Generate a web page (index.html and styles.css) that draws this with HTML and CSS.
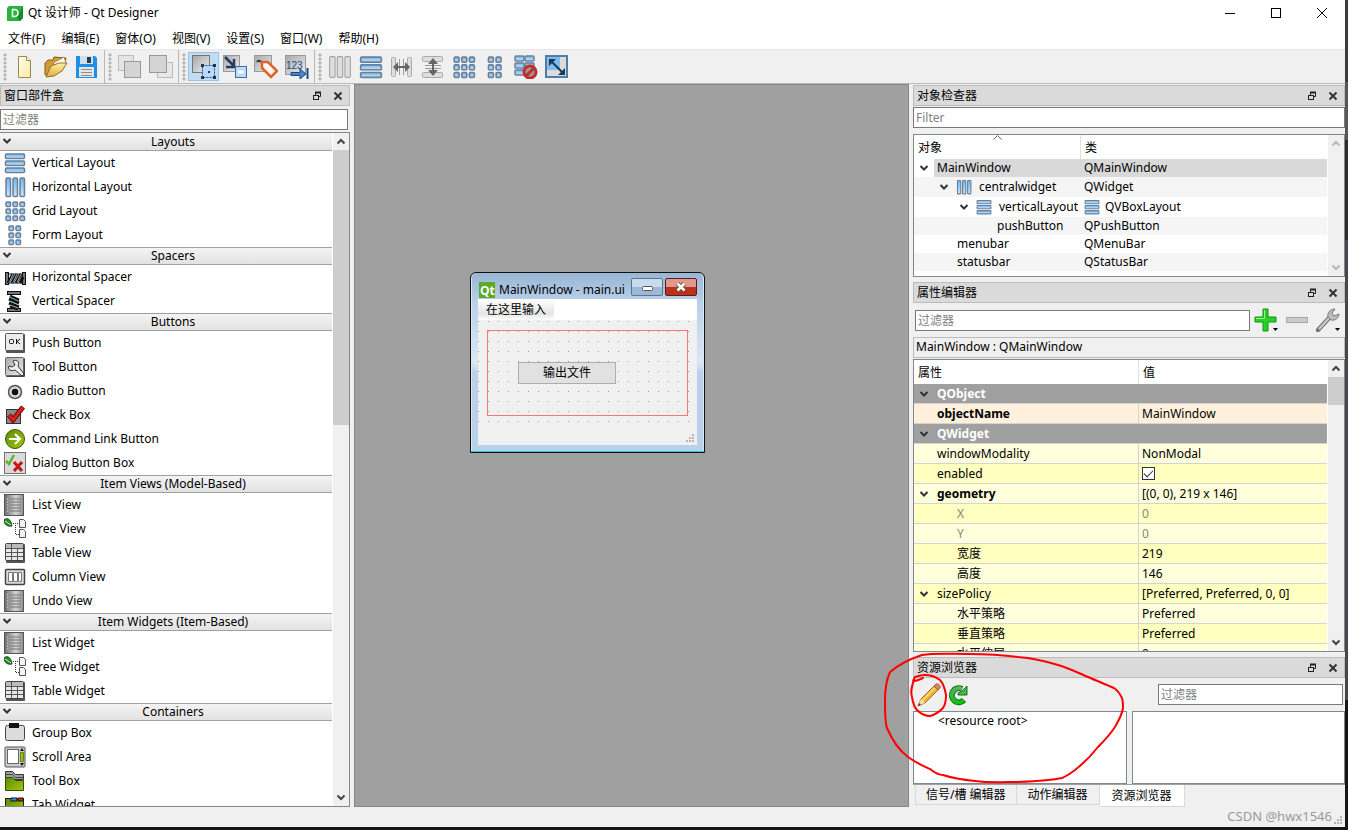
FILE: index.html
```html
<!DOCTYPE html>
<html lang="zh-CN">
<head>
<meta charset="utf-8">
<title>Qt 设计师 - Qt Designer</title>
<link rel="stylesheet" href="styles.css">
</head>
<body>
<svg class="defs" width="0" height="0" aria-hidden="true">
  <defs>
    <linearGradient id="blue" x1="0" y1="0" x2="0" y2="1"><stop offset="0" stop-color="#6fb6e8"/><stop offset="1" stop-color="#c8e6fa"/></linearGradient>
    <linearGradient id="gray" x1="0" y1="0" x2="1" y2="1"><stop offset="0" stop-color="#a8a8a8"/><stop offset="1" stop-color="#ededed"/></linearGradient>
    <linearGradient id="paper" x1="0" y1="0" x2="1" y2="1"><stop offset="0" stop-color="#fffef0"/><stop offset="1" stop-color="#fbe9a0"/></linearGradient>
    <linearGradient id="steel" x1="0" y1="0" x2="1" y2="0"><stop offset="0" stop-color="#6e6e6e"/><stop offset=".6" stop-color="#d4d4d4"/><stop offset="1" stop-color="#8a8a8a"/></linearGradient>
    <linearGradient id="green" x1="0" y1="0" x2="0" y2="1"><stop offset="0" stop-color="#5fae62"/><stop offset="1" stop-color="#12c012"/></linearGradient>
    <linearGradient id="lime" x1="0" y1="0" x2="1" y2="1"><stop offset="0" stop-color="#5d8a00"/><stop offset="1" stop-color="#a4c814"/></linearGradient>
    <linearGradient id="gold" x1="0" y1="0" x2="0" y2="1"><stop offset="0" stop-color="#fff0a8"/><stop offset="1" stop-color="#e2ab3c"/></linearGradient>
  </defs>
  <symbol id="i-vbox" viewBox="0 0 22 22"><g fill="url(#blue)" stroke="#6a7f9b" stroke-width="1.500"><rect x="1.500" y="2" width="19" height="4.500" rx="1"/><rect x="1.500" y="9" width="19" height="4.500" rx="1"/><rect x="1.500" y="16" width="19" height="4.500" rx="1"/></g></symbol>
  <symbol id="i-hbox" viewBox="0 0 22 22"><g fill="url(#blue)" stroke="#6a7f9b" stroke-width="1.500"><rect x="2" y="2" width="4.500" height="18.500" rx="1"/><rect x="9" y="2" width="4.500" height="18.500" rx="1"/><rect x="16" y="2" width="4.500" height="18.500" rx="1"/></g></symbol>
  <symbol id="i-hbox-off" viewBox="0 0 22 22"><g fill="#dedede" stroke="#a4a4a4"><rect x="1.500" y="1.500" width="5" height="19" rx="1"/><rect x="8.500" y="1.500" width="5" height="19" rx="1"/><rect x="15.500" y="1.500" width="5" height="19" rx="1"/></g></symbol>
  <symbol id="i-grid" viewBox="0 0 22 22"><g fill="url(#blue)" stroke="#6a7f9b" stroke-width="1.500"><rect x="2" y="2" width="4.500" height="4.500" rx="1"/><rect x="9" y="2" width="4.500" height="4.500" rx="1"/><rect x="16" y="2" width="4.500" height="4.500" rx="1"/><rect x="2" y="9" width="4.500" height="4.500" rx="1"/><rect x="9" y="9" width="4.500" height="4.500" rx="1"/><rect x="16" y="9" width="4.500" height="4.500" rx="1"/><rect x="2" y="16" width="4.500" height="4.500" rx="1"/><rect x="9" y="16" width="4.500" height="4.500" rx="1"/><rect x="16" y="16" width="4.500" height="4.500" rx="1"/></g></symbol>
  <symbol id="i-form" viewBox="0 0 22 22"><g fill="url(#blue)" stroke="#6a7f9b" stroke-width="1.500"><rect x="5" y="2" width="4.500" height="4.500" rx="1"/><rect x="12" y="2" width="4.500" height="4.500" rx="1"/><rect x="5" y="9" width="4.500" height="4.500" rx="1"/><rect x="12" y="9" width="4.500" height="4.500" rx="1"/><rect x="5" y="16" width="4.500" height="4.500" rx="1"/><rect x="12" y="16" width="4.500" height="4.500" rx="1"/></g></symbol>
  <symbol id="i-hspacer" viewBox="0 0 22 22"><rect x="1.500" y="6.500" width="3" height="12" fill="#777" stroke="#111"/><rect x="18.500" y="6.500" width="3" height="12" fill="#777" stroke="#111"/><path d="M4 17 9 8M8 17l5-9M12 17l5-9M16 17l3-6" stroke="#111" stroke-width="3"/><path d="M5 17l4-9M9 17l4-9M13 17l4-9" stroke="#8fb3c8"/><path d="M5 8h13M5 17h13" stroke="#222"/></symbol>
  <symbol id="i-vspacer" viewBox="0 0 22 22"><rect x="3.500" y="1.500" width="13" height="3" fill="#777" stroke="#111"/><rect x="3.500" y="18.500" width="13" height="3" fill="#777" stroke="#111"/><path d="M6 6l9 4M5 9l10 4M5 13l10 4M6 16l8 3" stroke="#111" stroke-width="3"/><path d="M6 7l8 4M6 11l9 4M6 15l8 3" stroke="#8fb3c8"/></symbol>
  <symbol id="i-push" viewBox="0 0 22 22"><rect x="2" y="2" width="19" height="19" rx="1" fill="#555"/><rect x="1.500" y="1.500" width="18" height="17" rx="1" fill="#ececec" stroke="#555"/><rect x="5.500" y="7.500" width="4" height="4" rx="1" fill="none" stroke="#111"/><path d="M12.500 7v5M16 7l-3 2.500 3 2.500" fill="none" stroke="#111"/></symbol>
  <symbol id="i-tool" viewBox="0 0 22 22"><rect x="2" y="2" width="19" height="19" rx="1" fill="#444"/><rect x="1.500" y="1.500" width="18" height="18" rx="1" fill="url(#gray)" stroke="#666"/><path d="M9 5c4-2 7 1 5 5l6 8-2 2-7-6c-4 2-8-1-6-4l3 1 3-2z" fill="#eee" stroke="#333"/></symbol>
  <symbol id="i-radio" viewBox="0 0 22 22"><circle cx="11" cy="12" r="6.500" fill="#d6d6d6" stroke="#555" stroke-width="1.500"/><circle cx="11" cy="12" r="3.200" fill="#111"/></symbol>
  <symbol id="i-check" viewBox="0 0 22 22"><rect x="2.500" y="5.500" width="14" height="14" fill="#8b8b8b" stroke="#333"/><path d="M5 11l4 5L19 3" fill="none" stroke="#5b0808" stroke-width="5"/><path d="M5 11l4 5L19 3" fill="none" stroke="#e01c1c" stroke-width="3"/></symbol>
  <symbol id="i-link" viewBox="0 0 22 22"><circle cx="11" cy="11" r="9.500" fill="url(#lime)" stroke="#3c5600"/><path d="M5 11h11M11 6l5 5-5 5" fill="none" stroke="#fff" stroke-width="2"/></symbol>
  <symbol id="i-dialog" viewBox="0 0 22 22"><rect x=".5" y=".5" width="21" height="21" fill="#dadada" stroke="#707070"/><path d="M2 9l3 3 5-9" fill="none" stroke="#5db52c" stroke-width="2.500"/><path d="M10 10l8 9M18 10l-8 9" stroke="#c41414" stroke-width="3"/></symbol>
  <symbol id="i-list" viewBox="0 0 22 22"><rect x=".5" y=".5" width="19" height="21" fill="url(#steel)" stroke="#555"/><path d="M6 5h11M6 8h11M6 11h11M6 14h11M6 17h11" stroke="#777"/><path d="M3 5h1M3 8h1M3 11h1M3 14h1M3 17h1" stroke="#ddd"/></symbol>
  <symbol id="i-tree" viewBox="0 0 22 22"><path d="M0 2c3-3 7-1 8 6-5 1-8-2-8-6z" fill="#2c8a2c" stroke="#124a12"/><path d="M1 3l6 4" stroke="#c6f0b8"/><path d="M9 5.500h6M11.500 7v10M12 16.500h4" stroke="#333" stroke-dasharray="1 1" fill="none"/><path d="M15.500 1.500h4l2 2v6h-6zM15.500 11.500h4l2 2v6h-6z" fill="#f3f3f3" stroke="#555"/></symbol>
  <symbol id="i-table" viewBox="0 0 22 22"><rect x="2" y="2" width="19" height="19" rx="1" fill="#555"/><rect x="1.500" y="1.500" width="18" height="17" rx="1" fill="#e8e8e8" stroke="#444"/><path d="M2 4h17" stroke="#bbb" stroke-width="4"/><path d="M2 6.500h17M2 10.500h17M2 14.500h17M7.500 2v16M13.500 6v12" stroke="#555"/></symbol>
  <symbol id="i-column" viewBox="0 0 22 22"><rect x="1.500" y="3.500" width="19" height="15" rx="1" fill="#ddd" stroke="#444" stroke-width="1.500"/><path d="M4.500 6.500h4v9h-4zM9.500 6.500h4v9h-4zM14.500 6.500h3v9h-3z" fill="#fff" stroke="#777"/></symbol>
  <symbol id="i-group" viewBox="0 0 22 22"><rect x="1.500" y="3.500" width="19" height="15" rx="2" fill="#dcdcdc" stroke="#444"/><path d="M5 1h10v5H5z" fill="#111"/></symbol>
  <symbol id="i-scroll" viewBox="0 0 22 22"><rect x="1" y="1" width="20" height="20" rx="1" fill="#ccc" stroke="#555"/><rect x="3.500" y="3.500" width="11" height="14" fill="#fff" stroke="#666"/><path d="M18 2l2 3h-4zM18 20l2-3h-4z" fill="#111"/><path d="M16.500 6.500h3v9h-3z" fill="#9cbe18" stroke="#5d8a00"/></symbol>
  <symbol id="i-toolbox" viewBox="0 0 22 22"><path d="M1.500 1.500h7l3 3h8v5h-18z" fill="#a0a0a0" stroke="#333"/><path d="M1.500 4.500h7l3 3h8" fill="none" stroke="#444"/><path d="M1.500 7.500h7l3 3h8v10h-18z" fill="url(#lime)" stroke="#334c00"/></symbol>
  <symbol id="i-tab" viewBox="0 0 22 22"><rect x="1.500" y="4.500" width="18" height="16" fill="url(#lime)" stroke="#222"/><path d="M7 4h6v3H7z" fill="#2f8fe8" stroke="#111"/><path d="M14 4h5v3h-5z" fill="#e82020" stroke="#111"/></symbol>

  <symbol id="i-new" viewBox="0 0 24 24"><path d="M5.500 1.500h8l4 4v17h-12z" fill="url(#paper)" stroke="#9a8a50"/><path d="M13.500 1.500v4h4" fill="#fff" stroke="#9a8a50"/></symbol>
  <symbol id="i-open" viewBox="0 0 24 24"><path d="M1 20V8l3-3h5l1-3 12 1-1 6-8 8z" fill="#d69a32" stroke="#80601c"/><path d="M9 8l11-6 2 6-6 6z" fill="#fdfdf0" stroke="#a08a50"/><path d="M2 22l5-11 8-3h8l-5 8-8 5z" fill="url(#gold)" stroke="#94701e"/></symbol>
  <symbol id="i-save" viewBox="0 0 24 24"><path d="M1 1h19l2 2v20H1z" fill="#1e90e8"/><path d="M5 1h13v8H5z" fill="#cfe0ea"/><path d="M12 2h4v6h-4z" fill="#2d3e50"/><path d="M4 12h15v10H4z" fill="#e6e6e6"/><path d="M6 14.500h11M6 17.500h11M6 20.500h11" stroke="#8c8c8c"/></symbol>
  <symbol id="i-raise" viewBox="0 0 24 24"><rect x=".5" y=".5" width="15" height="15" fill="#e4e4e4" stroke="#bcbcbc"/><rect x="6.500" y="6.500" width="16" height="16" fill="#d4d4d4" stroke="#999"/></symbol>
  <symbol id="i-lower" viewBox="0 0 24 24"><rect x="8.500" y="7.500" width="15" height="15" fill="#e8e8e8" stroke="#bcbcbc"/><rect x=".5" y=".5" width="17" height="17" fill="#d4d4d4" stroke="#999"/></symbol>
  <symbol id="i-edit" viewBox="0 0 24 24"><rect x=".5" y=".5" width="17" height="17" fill="url(#gray)" stroke="#777"/><rect x="10.500" y="10.500" width="12" height="12" fill="#b9d9ff" stroke="#2e4b78" stroke-dasharray="2 1"/><path d="M9 9h3v3H9zM21 9h3v3h-3zM9 21h3v3H9zM21 21h3v3h-3zM16 16h2v2h-2z" fill="#1d355e"/></symbol>
  <symbol id="i-signal" viewBox="0 0 24 24"><rect x=".5" y=".5" width="16" height="16" fill="url(#gray)" stroke="#999"/><path d="M2 2l9 9M11 4v8H3" fill="none" stroke="#253e5e" stroke-width="2.500"/><rect x="12.500" y="11.500" width="11" height="11" fill="#b9d9ff" stroke="#426ba8"/><path d="M15 17h6" stroke="#fff" stroke-width="3"/></symbol>
  <symbol id="i-buddy" viewBox="0 0 24 24"><rect x=".5" y=".5" width="17" height="16" fill="url(#gray)" stroke="#999"/><path d="M3 7c2-3 5 0 6 3" fill="none" stroke="#333" stroke-width="2"/><path d="M8 7l6 0 9 9-6 6-9-9z" fill="#fff3ea" stroke="#dc6428" stroke-width="2.500"/></symbol>
  <symbol id="i-hsplit" viewBox="0 0 24 24"><g fill="#dedede" stroke="#aaa"><rect x="1.500" y="2.500" width="4" height="19" rx="1"/><rect x="17.500" y="2.500" width="4" height="19" rx="1"/></g><path d="M9.500 4v16M13.500 4v16" stroke="#999"/><path d="M3 12l5-5v4h7V7l5 5-5 5v-4H8v4z" fill="#666"/></symbol>
  <symbol id="i-vsplit" viewBox="0 0 24 24"><g fill="#dedede" stroke="#aaa"><rect x="1.500" y="1.500" width="20" height="5" rx="1"/><rect x="1.500" y="17.500" width="20" height="5" rx="1"/></g><path d="M4 10.500h16M4 13.500h16" stroke="#999"/><path d="M12 3l5 6h-4v6h4l-5 6-5-6h4V9H7z" fill="#666"/></symbol>
  <symbol id="i-break" viewBox="0 0 24 24"><g fill="url(#blue)" stroke="#6a7f9b" stroke-width="1.500"><rect x="1" y="1" width="9" height="5" rx="1"/><rect x="11" y="1" width="9" height="5" rx="1"/><rect x="1" y="8" width="9" height="5" rx="1"/><rect x="11" y="8" width="9" height="5" rx="1"/><rect x="1" y="15" width="9" height="5" rx="1"/></g><circle cx="16" cy="17" r="6" fill="#9a9a9a" stroke="#c42c2c" stroke-width="3"/><path d="M12 21l8-8" stroke="#c42c2c" stroke-width="3"/></symbol>
  <symbol id="i-adjust" viewBox="0 0 24 24"><rect x="1" y="1" width="21" height="21" fill="#dcdcdc" stroke="#4f7cab" stroke-width="2"/><path d="M2 2h13v13H2z" fill="#80bdec"/><path d="M6 6l11 11" stroke="#123a5c" stroke-width="2"/><path d="M4 4h7l-7 7zM20 20h-7l7-7z" fill="#123a5c"/></symbol>

  <symbol id="i-chevron" viewBox="0 0 10 10"><path d="M1.500 3l3.500 3.500L8.500 3" fill="none" stroke="currentColor" stroke-width="2"/></symbol>
  <symbol id="i-float" viewBox="0 0 10 10"><path d="M3.500 4V1.500h5v4H6" fill="none" stroke="#222"/><path d="M3 1.500h6" stroke="#222" stroke-width="2"/><rect x="1.500" y="4.500" width="5" height="4" fill="none" stroke="#222"/></symbol>
  <symbol id="i-close" viewBox="0 0 10 10"><path d="M1.500 1.500l7 7M8.500 1.500l-7 7" stroke="#333" stroke-width="2"/></symbol>
  <symbol id="i-plus" viewBox="0 0 24 24"><path d="M9 1h5v8h8v5h-8v9H9v-9H1V9h8z" fill="#25d225" stroke="#119611"/><path d="M10.500 2v8.500H2" fill="none" stroke="#9df59d"/><path d="M19 20h5l-2.500 3z" fill="#000"/></symbol>
  <symbol id="i-minus" viewBox="0 0 24 24"><rect x="1.500" y="9.500" width="21" height="5" fill="#ccc" stroke="#a6a6a6"/></symbol>
  <symbol id="i-wrench" viewBox="0 0 24 24"><path d="M2 22L14 9" stroke="#777" stroke-width="4.500" stroke-linecap="round"/><path d="M3 21L14 9" stroke="#cfcfcf" stroke-width="2"/><path d="M12 9c-1-5 3-8 7-8l-3 4 2 3 5-2c0 4-4 7-8 6z" fill="#bdbdbd" stroke="#777"/><path d="M19 20h5l-2.500 3z" fill="#000"/></symbol>
  <symbol id="i-pencil" viewBox="0 0 24 24"><path d="M1 23l3-7L17 3l4 4L8 20z" fill="#f2b134" stroke="#a67418"/><path d="M5 18L18 5" stroke="#ffe090" stroke-width="1.500"/><path d="M17 3l2-2c2-1 5 2 4 4l-2 2z" fill="#d98163" stroke="#a35b45"/><path d="M1 23l3-7 4 4z" fill="#f3dcae"/><path d="M1 23l1-3 2 2z" fill="#333"/></symbol>
  <symbol id="i-reload" viewBox="0 0 24 24"><path d="M16 6a7 7 0 1 0 2 11" fill="none" stroke="#0a7a14" stroke-width="6"/><path d="M16 6a7 7 0 1 0 2 11" fill="none" stroke="url(#green)" stroke-width="4"/><path d="M12 12V10l4-2 5-5v9z" fill="#4cb351" stroke="#0a7a14"/></symbol>
</svg>

<div class="app">
  <header class="titlebar">
    <svg class="logo" viewBox="0 0 16 16" aria-hidden="true"><path d="M0 3l2-2h14v12l-3 3H0z" fill="#28b43c"/><path d="M16 1v12l-3 3-3-3z" fill="#148a2a"/><path d="M5.500 4.500h2a3 3 0 0 1 0 7h-2z" fill="none" stroke="#fff" stroke-width="1.500"/></svg>
    <h1>Qt 设计师 - Qt Designer</h1>
    <div class="window-buttons">
      <button aria-label="最小化"><svg viewBox="0 0 12 12"><path d="M1 6.500h10" stroke="#000"/></svg></button>
      <button aria-label="最大化"><svg viewBox="0 0 12 12"><rect x="1.500" y="1.500" width="9" height="9" fill="none" stroke="#000"/></svg></button>
      <button aria-label="关闭"><svg viewBox="0 0 12 12"><path d="M1 1l10 10M11 1L1 11" stroke="#000"/></svg></button>
    </div>
  </header>

  <nav class="menubar">
    <button>文件(F)</button><button>编辑(E)</button><button>窗体(O)</button><button>视图(V)</button><button>设置(S)</button><button>窗口(W)</button><button>帮助(H)</button>
  </nav>

  <div class="toolbars">
    <div class="toolbar">
      <button aria-label="新建"><svg><use href="#i-new"/></svg></button>
      <button aria-label="打开"><svg><use href="#i-open"/></svg></button>
      <button aria-label="保存"><svg><use href="#i-save"/></svg></button>
    </div>
    <div class="toolbar">
      <button aria-label="放到前面"><svg><use href="#i-raise"/></svg></button>
      <button aria-label="放到后面"><svg><use href="#i-lower"/></svg></button>
    </div>
    <div class="toolbar">
      <button class="active" aria-label="编辑窗口部件"><svg><use href="#i-edit"/></svg></button>
      <button aria-label="编辑信号/槽"><svg><use href="#i-signal"/></svg></button>
      <button aria-label="编辑伙伴"><svg><use href="#i-buddy"/></svg></button>
      <button aria-label="编辑 Tab 顺序"><svg viewBox="0 0 24 24"><rect x=".5" y=".5" width="20" height="19" fill="url(#gray)" stroke="#999"/><text x="1" y="14" class="icon-digits">123</text><path d="M6 17.500h9V14l6 5-6 5v-3.500H6z" fill="#4c84c8" stroke="#1c4984"/><path d="M22.500 13v11" stroke="#1c4984" stroke-width="2"/></svg></button>
    </div>
    <div class="toolbar">
      <button aria-label="水平布局"><svg><use href="#i-hbox-off"/></svg></button>
      <button aria-label="垂直布局"><svg><use href="#i-vbox"/></svg></button>
      <button aria-label="使用分裂器水平布局"><svg><use href="#i-hsplit"/></svg></button>
      <button aria-label="使用分裂器垂直布局"><svg><use href="#i-vsplit"/></svg></button>
      <button aria-label="栅格布局"><svg><use href="#i-grid"/></svg></button>
      <button aria-label="在窗体布局中布局"><svg><use href="#i-form"/></svg></button>
      <button aria-label="打破布局"><svg><use href="#i-break"/></svg></button>
      <button aria-label="调整大小"><svg><use href="#i-adjust"/></svg></button>
    </div>
  </div>

  <main class="workspace">
    <section class="widget-box">
      <div class="dock-title"><h2>窗口部件盒</h2><button aria-label="浮动"><svg><use href="#i-float"/></svg></button><button aria-label="关闭"><svg><use href="#i-close"/></svg></button></div>
      <input class="filter" type="text" placeholder="过滤器" aria-label="过滤器">
      <div class="frame widget-frame">
        <div class="widget-list">
          <button class="category"><svg><use href="#i-chevron"/></svg>Layouts</button>
          <ul>
            <li><svg><use href="#i-vbox"/></svg>Vertical Layout</li>
            <li><svg><use href="#i-hbox"/></svg>Horizontal Layout</li>
            <li><svg><use href="#i-grid"/></svg>Grid Layout</li>
            <li><svg><use href="#i-form"/></svg>Form Layout</li>
          </ul>
          <button class="category"><svg><use href="#i-chevron"/></svg>Spacers</button>
          <ul>
            <li><svg><use href="#i-hspacer"/></svg>Horizontal Spacer</li>
            <li><svg><use href="#i-vspacer"/></svg>Vertical Spacer</li>
          </ul>
          <button class="category"><svg><use href="#i-chevron"/></svg>Buttons</button>
          <ul>
            <li><svg><use href="#i-push"/></svg>Push Button</li>
            <li><svg><use href="#i-tool"/></svg>Tool Button</li>
            <li><svg><use href="#i-radio"/></svg>Radio Button</li>
            <li><svg><use href="#i-check"/></svg>Check Box</li>
            <li><svg><use href="#i-link"/></svg>Command Link Button</li>
            <li><svg><use href="#i-dialog"/></svg>Dialog Button Box</li>
          </ul>
          <button class="category"><svg><use href="#i-chevron"/></svg>Item Views (Model-Based)</button>
          <ul>
            <li><svg><use href="#i-list"/></svg>List View</li>
            <li><svg><use href="#i-tree"/></svg>Tree View</li>
            <li><svg><use href="#i-table"/></svg>Table View</li>
            <li><svg><use href="#i-column"/></svg>Column View</li>
            <li><svg><use href="#i-list"/></svg>Undo View</li>
          </ul>
          <button class="category"><svg><use href="#i-chevron"/></svg>Item Widgets (Item-Based)</button>
          <ul>
            <li><svg><use href="#i-list"/></svg>List Widget</li>
            <li><svg><use href="#i-tree"/></svg>Tree Widget</li>
            <li><svg><use href="#i-table"/></svg>Table Widget</li>
          </ul>
          <button class="category"><svg><use href="#i-chevron"/></svg>Containers</button>
          <ul>
            <li><svg><use href="#i-group"/></svg>Group Box</li>
            <li><svg><use href="#i-scroll"/></svg>Scroll Area</li>
            <li><svg><use href="#i-toolbox"/></svg>Tool Box</li>
            <li><svg><use href="#i-tab"/></svg>Tab Widget</li>
          </ul>
        </div>
        <div class="scrollbar"><svg class="up"><use href="#i-chevron"/></svg><div class="track"><div class="thumb thumb-long"></div></div><svg><use href="#i-chevron"/></svg></div>
      </div>
    </section>

    <section class="canvas">
      <div class="form-window">
        <div class="form-title">
          <svg class="qt" viewBox="0 0 16 16" aria-hidden="true"><rect width="16" height="16" fill="#5caa28"/><text x="1" y="13" class="qt-text">Qt</text></svg>
          <span class="form-name">MainWindow - main.ui</span>
          <button class="win-btn" aria-label="最小化"><svg viewBox="0 0 30 16"><rect x="10.500" y="7.500" width="10" height="4" rx="1" fill="#fff" stroke="#555"/></svg></button>
          <button class="win-btn win-close" aria-label="关闭"><svg viewBox="0 0 30 16"><path d="M11.500 4.500l7 7M18.500 4.500l-7 7" stroke="#555" stroke-width="4.500"/><path d="M11.500 4.500l7 7M18.500 4.500l-7 7" stroke="#fff" stroke-width="2.500"/></svg></button>
        </div>
        <div class="form-body">
          <div class="form-menu"><button>在这里输入</button></div>
          <div class="form-central">
            <div class="v-layout"></div>
            <button class="push-button">输出文件</button>
          </div>
          <div class="form-status"><i class="size-grip"></i></div>
        </div>
      </div>
    </section>

    <aside class="docks">
      <section class="inspector">
        <div class="dock-title"><h2>对象检查器</h2><button aria-label="浮动"><svg><use href="#i-float"/></svg></button><button aria-label="关闭"><svg><use href="#i-close"/></svg></button></div>
        <input class="filter" type="text" placeholder="Filter" aria-label="Filter">
        <div class="frame tree-frame">
          <table class="tree">
            <colgroup><col class="col-object"><col></colgroup>
            <thead><tr><th>对象<svg class="sort" viewBox="0 0 9 5"><path d="M.5 4.500l4-4 4 4" fill="none" stroke="#666"/></svg></th><th>类</th></tr></thead>
            <tbody>
              <tr class="selected"><td><div class="cell"><svg class="chev"><use href="#i-chevron"/></svg>MainWindow</div></td><td>QMainWindow</td></tr>
              <tr class="tall alt"><td><div class="cell level-1"><svg class="chev"><use href="#i-chevron"/></svg><svg class="ico"><use href="#i-hbox"/></svg>centralwidget</div></td><td>QWidget</td></tr>
              <tr class="tall"><td><div class="cell level-2"><svg class="chev"><use href="#i-chevron"/></svg><svg class="ico"><use href="#i-vbox"/></svg>verticalLayout</div></td><td><div class="cell"><svg class="ico"><use href="#i-vbox"/></svg>QVBoxLayout</div></td></tr>
              <tr class="alt"><td><div class="cell level-4">pushButton</div></td><td>QPushButton</td></tr>
              <tr><td><div class="cell level-3">menubar</div></td><td>QMenuBar</td></tr>
              <tr class="alt"><td><div class="cell level-3">statusbar</div></td><td>QStatusBar</td></tr>
            </tbody>
          </table>
          <div class="scrollbar disabled"><svg class="up"><use href="#i-chevron"/></svg><div class="track"></div><svg><use href="#i-chevron"/></svg></div>
        </div>
      </section>

      <section class="properties">
        <div class="dock-title"><h2>属性编辑器</h2><button aria-label="浮动"><svg><use href="#i-float"/></svg></button><button aria-label="关闭"><svg><use href="#i-close"/></svg></button></div>
        <div class="property-tools">
          <input class="filter" type="text" placeholder="过滤器" aria-label="属性过滤器">
          <button aria-label="添加动态属性"><svg><use href="#i-plus"/></svg></button>
          <button aria-label="删除动态属性"><svg><use href="#i-minus"/></svg></button>
          <button aria-label="配置"><svg><use href="#i-wrench"/></svg></button>
        </div>
        <div class="class-label">MainWindow : QMainWindow</div>
        <div class="frame property-frame">
          <div class="property-scroll">
          <table class="props">
            <colgroup><col class="col-name"><col></colgroup>
            <thead><tr><th>属性</th><th>值</th></tr></thead>
            <tbody>
              <tr class="group"><td colspan="2"><div class="cell"><svg class="chev"><use href="#i-chevron"/></svg>QObject</div></td></tr>
              <tr class="peach changed"><td><div class="cell leaf">objectName</div></td><td>MainWindow</td></tr>
              <tr class="group"><td colspan="2"><div class="cell"><svg class="chev"><use href="#i-chevron"/></svg>QWidget</div></td></tr>
              <tr><td><div class="cell leaf">windowModality</div></td><td>NonModal</td></tr>
              <tr class="dark"><td><div class="cell leaf">enabled</div></td><td><div class="cell"><input class="tick" type="checkbox" checked aria-label="enabled"></div></td></tr>
              <tr class="changed"><td><div class="cell"><svg class="chev"><use href="#i-chevron"/></svg>geometry</div></td><td>[(0, 0), 219 x 146]</td></tr>
              <tr class="dark off"><td><div class="cell sub">X</div></td><td>0</td></tr>
              <tr class="off"><td><div class="cell sub">Y</div></td><td>0</td></tr>
              <tr class="dark"><td><div class="cell sub">宽度</div></td><td>219</td></tr>
              <tr><td><div class="cell sub">高度</div></td><td>146</td></tr>
              <tr class="dark"><td><div class="cell"><svg class="chev"><use href="#i-chevron"/></svg>sizePolicy</div></td><td>[Preferred, Preferred, 0, 0]</td></tr>
              <tr><td><div class="cell sub">水平策略</div></td><td>Preferred</td></tr>
              <tr class="dark"><td><div class="cell sub">垂直策略</div></td><td>Preferred</td></tr>
              <tr><td><div class="cell sub">水平伸展</div></td><td>0</td></tr>
            </tbody>
          </table>
          </div>
          <div class="scrollbar"><svg class="up"><use href="#i-chevron"/></svg><div class="track"><div class="thumb thumb-short"></div></div><svg><use href="#i-chevron"/></svg></div>
        </div>
      </section>

      <section class="resources">
        <div class="dock-title"><h2>资源浏览器</h2><button aria-label="浮动"><svg><use href="#i-float"/></svg></button><button aria-label="关闭"><svg><use href="#i-close"/></svg></button></div>
        <div class="resource-tools">
          <button aria-label="编辑资源"><svg><use href="#i-pencil"/></svg></button>
          <button aria-label="重新加载"><svg><use href="#i-reload"/></svg></button>
          <input class="filter" type="text" placeholder="过滤器" aria-label="资源过滤器">
        </div>
        <div class="resource-views">
          <div class="frame root-view">&lt;resource root&gt;</div>
          <div class="frame"></div>
        </div>
        <svg class="annotation" viewBox="0 0 250 140" aria-hidden="true"><g fill="none" stroke="#f00" stroke-width="2" stroke-linecap="round" stroke-linejoin="round"><path d="M37 2C25 6 12 13 5 19C1 28 0 38 0 47C0 62 0 70 2 75C8 89 15 98 23 104C33 111 38 113 45 116C50 120 54 122 58 122C70 126 80 127 90 128C105 130 120 129 133 129C155 128 168 127 177 125C182 123 186 120 190 117C200 109 206 103 213 94C221 86 226 80 230 74C234 67 237 62 238 55C238 51 238 48 237 45C235 41 232 37 229 35C220 31 212 28 203 24C193 20 184 15 173 12C160 8 146 5 133 4C118 2 100 1 83 1C65 1 50 0 37 2"/><path d="M29 27C27 33 25 38 27 44C28 50 29 54 32 57C36 61 40 63 45 63C50 62 54 59 58 55C61 51 61 47 61 42C60 36 59 31 55 27C51 24 45 22 40 22C36 22 33 23 30 24L28 28C31 28 34 27 38 25"/></g></svg>
      </section>

      <nav class="tabs"><button>信号/槽 编辑器</button><button>动作编辑器</button><button class="current">资源浏览器</button></nav>
    </aside>
  </main>

  <footer class="statusbar"><span>CSDN @hwx1546</span><i class="size-grip"></i></footer>
</div>
</body>
</html>
```

FILE: styles.css
```css
* { box-sizing: border-box; }

body {
  margin: 0;
  height: 100vh;
  padding: 0 3px 3px 0;
  overflow: hidden;
  background: linear-gradient(#3a3d3f 0 82px, #55585a 82px 140px, #2b2b2b 140px 240px, #45484a 240px 700px, #161616 700px);
  font: 12px/18px "Noto Sans", "Noto Sans CJK SC", sans-serif;
  color: #000;
}

button, input { font: inherit; color: inherit; margin: 0; }
button { border: 0; padding: 0; background: none; }
h1, h2 { margin: 0; font-size: 12px; font-weight: 400; }
ul { list-style: none; margin: 0; padding: 0; }
svg { display: block; flex: none; }
.defs { position: absolute; }
.icon-digits { font: 10px "Liberation Sans", sans-serif; fill: #1c4984; }

.app { height: 100%; display: flex; flex-direction: column; background: #f0f0f0; }

.titlebar { height: 25px; flex: none; display: flex; align-items: center; background: #fff; padding-left: 7px; gap: 5px; }
.titlebar h1 { flex: 1; }
.logo { width: 16px; height: 16px; }
.window-buttons { display: flex; }
.window-buttons button { width: 46px; height: 25px; display: grid; place-items: center; }
.window-buttons svg { width: 12px; height: 12px; }

.menubar { height: 25px; flex: none; display: flex; background: #fff; border-bottom: 1px solid #e8e8e8; padding-top: 3px; }
.menubar button { padding: 0 8px; }

.toolbars { height: 34px; flex: none; display: flex; border-bottom: 1px solid #b8b8b8; }
.toolbar { display: flex; align-items: center; padding-right: 2px; border-right: 1px solid #b8b8b8; }
.toolbar:last-child { border-right: 0; }
.toolbar::before { content: ""; width: 9px; height: 28px; background: radial-gradient(circle at 5px 2px, #b4b4b4 1px, transparent 2px) 0 0 / 9px 4px; }
.toolbar button { width: 31px; height: 29px; display: grid; place-items: center; }
.toolbar .active { background: #c2ddf2; border: 1px solid #94c4ea; }
.toolbar svg { width: 24px; height: 24px; }

.workspace { flex: 1; min-height: 0; display: grid; grid-template-columns: 350px minmax(0, 1fr) 432px; gap: 4px; }

.dock-title { height: 21px; flex: none; display: flex; align-items: center; gap: 11px; padding: 0 6px 0 3px; background: #dadada; border: 1px solid #bcbcbc; }
.dock-title h2 { flex: 1; }
.dock-title svg { width: 10px; height: 10px; }
.filter { height: 21px; width: 100%; flex: none; border: 1px solid #7a7a7a; border-radius: 0; padding: 0 2px; background: #fff; }
.filter::placeholder { color: #7f7f7f; opacity: 1; }
.frame { border: 1px solid #828790; background: #fff; }

.scrollbar { width: 17px; flex: none; background: #f0f0f0; border-left: 1px solid #fff; display: flex; flex-direction: column; align-items: center; color: #444; }
.scrollbar svg { width: 10px; height: 17px; }
.scrollbar .up { transform: rotate(180deg); }
.track { flex: 1; width: 100%; min-height: 0; }
.thumb { background: #cdcdcd; }
.thumb-long { height: 43%; }
.thumb-short { height: 28px; }
.disabled { color: #b8b8b8; }

.widget-box { min-height: 0; display: flex; flex-direction: column; padding-top: 1px; }
.widget-box .filter { margin: 3px 0 2px; width: 348px; }
.widget-frame { flex: 1; min-height: 0; display: flex; border-left: 0; }
.widget-list { flex: 1; min-width: 0; overflow: hidden; }
.category { position: relative; display: block; width: 100%; height: 18px; padding-left: 14px; line-height: 16px; text-align: center; border-top: 1px solid #a0a0a0; border-bottom: 1px solid #a0a0a0; background: linear-gradient(#f4f4f4, #e2e2e2); }
.category:first-child { border-top-color: #f0f0f0; }
.category svg { position: absolute; left: 2px; top: 2px; width: 10px; height: 10px; color: #333; }
.widget-list li { height: 24px; display: flex; align-items: center; gap: 6px; padding-left: 4px; padding-bottom: 1px; }
.widget-list li svg { width: 22px; height: 22px; }

.canvas { position: relative; background: #a0a0a0; border: 1px solid #828790; overflow: hidden; }
.form-window { position: absolute; left: 115px; top: 187px; width: 235px; border: 1px solid #111; border-radius: 6px 6px 0 0; padding: 0 7px 7px; background: linear-gradient(#9ab6d4, #b9d1ea 30px, #dbe8f4 90px, #b9d1ea 100px); box-shadow: inset 0 -1px #35c8dc, inset 1px 0 #dceaf6, inset -1px 0 #dceaf6; }
.form-title { height: 26px; display: flex; gap: 2px; }
.qt { width: 16px; height: 16px; align-self: flex-end; margin: 0 2px 1px 1px; }
.qt-text { font: bold 12px "Open Sans", sans-serif; fill: #fff; }
.form-name { flex: 1; min-width: 0; padding-top: 8px; white-space: nowrap; }
.win-btn { width: 32px; height: 18px; margin-top: 5px; border: 1px solid #5c7490; border-radius: 2px; background: linear-gradient(#c8dcf0 50%, #9cb8d6 50%); }
.win-close { background: linear-gradient(#e0998c 50%, #b8321c 50%); border-color: #5b1c1c; }
.win-btn svg { width: 30px; height: 16px; }
.form-body { background: #f0f0f0; }
.form-menu { height: 21px; background: #fff; }
.form-menu button { height: 21px; padding: 0 8px; background: linear-gradient(#fff, #e4e4e4 70%, #fff); }
.form-central { position: relative; height: 105px; background: conic-gradient(at 1px 1px, transparent 270deg, #999 270deg) 0 1px / 10px 10px; }
.v-layout { position: absolute; inset: 10px 9px 9px; border: 1px solid #f47878; }
.push-button { position: absolute; left: 40px; top: 42px; width: 98px; height: 22px; border: 1px solid #adadad; background: #e1e1e1; }
.form-status { height: 20px; display: flex; justify-content: flex-end; align-items: flex-end; padding: 2px; }
.size-grip { width: 9px; height: 9px; background: conic-gradient(at 2px 2px, transparent 270deg, #b4b4b4 270deg) 0 0 / 3px 3px; clip-path: polygon(100% 0, 100% 100%, 0 100%, 0 66%, 33% 66%, 33% 33%, 66% 33%, 66% 0); }

.docks { min-height: 0; display: flex; flex-direction: column; padding-top: 1px; }
.inspector, .properties, .resources { display: flex; flex-direction: column; }
.inspector .filter { margin: 1px 0 6px; }
.tree-frame { height: 143px; display: flex; }
table { border-spacing: 0; table-layout: fixed; width: 100%; }
th, td { padding: 0 3px; text-align: left; font-weight: 400; white-space: nowrap; overflow: hidden; }
th { height: 24px; vertical-align: middle; padding: 2px 4px 0; }
.tree { flex: 1; align-self: flex-start; background: #fff; }
.tree th { position: relative; }
.tree th:first-child { border-right: 1px solid #e0e0e0; }
.sort { position: absolute; right: 78px; top: 0; width: 9px; height: 5px; }
.col-object { width: 167px; }
.col-name { width: 225px; }
.tree tr { height: 18px; }
.tree .tall { height: 20px; }
.selected { background: #d9d9d9; }
.selected td:first-child { background: linear-gradient(to right, #fff 20px, transparent 20px); }
.alt { background: #f5f5f5; }
.cell { display: flex; align-items: center; gap: 5px; }
.tree td:first-child .cell { gap: 8px; }
.tree td:first-child, .props td:first-child { padding-left: 5px; }
.tree td:first-child { padding-right: 0; }
.chev { width: 10px; height: 10px; color: #333; }
.ico { width: 16px; height: 16px; }
.tree td:first-child .level-1 { padding-left: 20px; gap: 7px; }
.tree td:first-child .level-2 { padding-left: 40px; gap: 7px; }
.level-3 { padding-left: 38px; }
.level-4 { padding-left: 78px; }

.properties { flex: 1; min-height: 0; margin-top: 5px; }
.property-tools { flex: none; display: flex; align-items: center; gap: 7px; padding: 5px 5px 5px 2px; }
.property-tools .filter { flex: 1; min-width: 0; margin-right: -3px; }
.property-tools svg, .resource-tools svg { width: 24px; height: 24px; }
.class-label { height: 21px; flex: none; border: 1px solid #bcbcbc; padding: 0 2px; margin-bottom: 1px; }
.property-frame { flex: 1; min-height: 0; display: flex; }
.property-scroll { flex: 1; min-width: 0; overflow: hidden; }
.props th:first-child { border-right: 1px solid #e0e0e0; }
.props tbody td { height: 20px; border-bottom: 1px solid #d4d4d4; background: #ffffdc; }
.props td:first-child { border-right: 1px solid #d4d4d4; }
.props .dark td { background: #ffffbf; }
.props .peach td { background: #fff0dc; }
.props .group td { background: #a0a0a0; border-right: 0; color: #fff; font-weight: 700; }
.props .changed td:first-child { font-weight: 700; }
.props td:first-child .cell { gap: 8px; }
.props .leaf { padding-left: 18px; }
.props .sub { padding-left: 38px; }
.off { color: #858585; }
.tick { appearance: none; width: 13px; height: 13px; border: 1px solid #333; background: #fff; display: grid; place-items: center; }
.tick:checked::before { content: ""; width: 8px; height: 4px; margin-bottom: 3px; border: solid #333; border-width: 0 0 1px 1px; transform: rotate(-45deg); }

.resources { position: relative; margin-top: 5px; }
.resource-tools { height: 33px; display: flex; align-items: center; gap: 5px; padding: 0 2px 0 4px; }
.resource-tools .filter { width: 185px; margin-left: auto; }
.resource-views { height: 73px; display: grid; grid-template-columns: 214px 1fr; gap: 5px; }
.root-view { padding-left: 24px; }
.annotation { position: absolute; left: -28px; top: -4px; width: 250px; height: 140px; overflow: visible; }

.tabs { height: 23px; flex: none; display: flex; align-items: flex-start; padding-left: 2px; border-top: 1px solid #a0a0a0; }
.tabs button { height: 20px; padding: 0 10px; border: 1px solid #d9d9d9; border-top: 0; }
.tabs button + button { padding: 0 11px; border-left: 0; }
.tabs .current { height: 22px; padding: 0 12px; background: #fff; }

.statusbar { height: 20px; flex: none; display: flex; justify-content: flex-end; align-items: center; gap: 2px; padding: 0 2px 2px; color: #9a9a9a; font-size: 13px; }
.statusbar .size-grip { align-self: flex-end; }
```
